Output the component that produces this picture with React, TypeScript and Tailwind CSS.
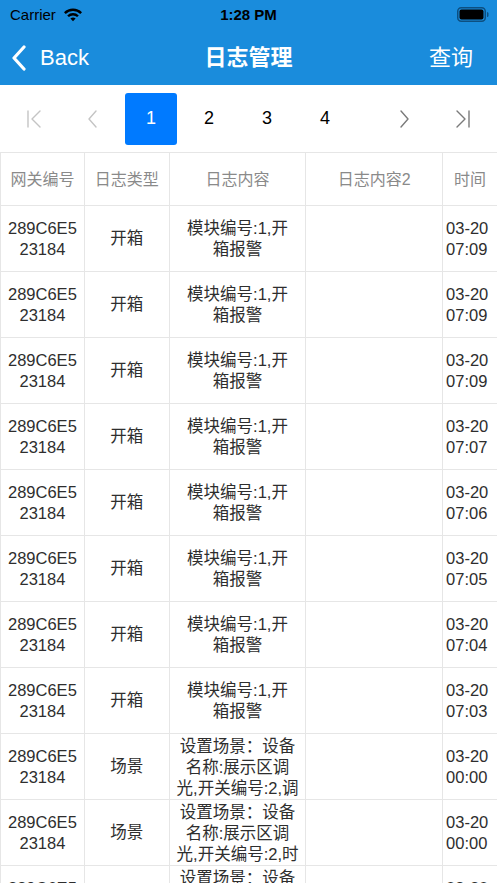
import React from 'react'

const FONT = '"Liberation Sans", "Noto Sans CJK SC", sans-serif'

type Row = { gw: string[]; type: string; content: string[]; time: string[] }

const GW = ['289C6E5', '23184']

const rows: Row[] = [
  { gw: GW, type: '开箱', content: ['模块编号:1,开', '箱报警'], time: ['03-20', '07:09'] },
  { gw: GW, type: '开箱', content: ['模块编号:1,开', '箱报警'], time: ['03-20', '07:09'] },
  { gw: GW, type: '开箱', content: ['模块编号:1,开', '箱报警'], time: ['03-20', '07:09'] },
  { gw: GW, type: '开箱', content: ['模块编号:1,开', '箱报警'], time: ['03-20', '07:07'] },
  { gw: GW, type: '开箱', content: ['模块编号:1,开', '箱报警'], time: ['03-20', '07:06'] },
  { gw: GW, type: '开箱', content: ['模块编号:1,开', '箱报警'], time: ['03-20', '07:05'] },
  { gw: GW, type: '开箱', content: ['模块编号:1,开', '箱报警'], time: ['03-20', '07:04'] },
  { gw: GW, type: '开箱', content: ['模块编号:1,开', '箱报警'], time: ['03-20', '07:03'] },
  { gw: GW, type: '场景', content: ['设置场景：设备', '名称:展示区调', '光,开关编号:2,调'], time: ['03-20', '00:00'] },
  { gw: GW, type: '场景', content: ['设置场景：设备', '名称:展示区调', '光,开关编号:2,时'], time: ['03-20', '00:00'] },
  { gw: GW, type: '场景', content: ['设置场景：设备', '名称:展示区调', '光,开关编号:2,时'], time: ['03-20', '00:00'] },
]

function Lines({ lines }: { lines: string[] }) {
  return (
    <>
      {lines.map((l, i) => (
        <div key={i} className="whitespace-nowrap">
          {l}
        </div>
      ))}
    </>
  )
}

function Wifi() {
  return (
    <svg width="20" height="15" viewBox="0 0 20 15">
      <path d="M1 5.2 A13 13 0 0 1 19 5.2 L17.3 7 A10.6 10.6 0 0 0 2.7 7 Z" fill="#000" />
      <path d="M4.2 8.4 A8.4 8.4 0 0 1 15.8 8.4 L14.1 10.1 A6 6 0 0 0 5.9 10.1 Z" fill="#000" />
      <path d="M7.4 11.6 A3.8 3.8 0 0 1 12.6 11.6 L10 14.3 Z" fill="#000" />
    </svg>
  )
}

function Battery() {
  return (
    <svg width="32" height="15" viewBox="0 0 32 15">
      <rect x="0.75" y="0.75" width="27.5" height="13.5" rx="3.5" fill="none" stroke="#0d4f80" strokeWidth="1.5" />
      <rect x="2.5" y="2.5" width="24" height="10" rx="2" fill="#000" />
      <path d="M30 5 Q31.5 5 31.5 6.5 L31.5 8.5 Q31.5 10 30 10 Z" fill="#0d4f80" />
    </svg>
  )
}

function PageIcon({ kind, color }: { kind: 'first' | 'prev' | 'next' | 'last'; color: string }) {
  return (
    <svg width="24" height="24" viewBox="0 0 24 24" fill="none" stroke={color} strokeWidth="1.4" strokeLinecap="round" strokeLinejoin="round">
      {kind === 'first' && (
        <>
          <path d="M5 4 V20" />
          <path d="M17 4 L9 12 L17 20" />
        </>
      )}
      {kind === 'prev' && <path d="M15 4 L8 12 L15 20" />}
      {kind === 'next' && <path d="M9 4 L16 12 L9 20" />}
      {kind === 'last' && (
        <>
          <path d="M7 4 L15 12 L7 20" />
          <path d="M19 4 V20" />
        </>
      )}
    </svg>
  )
}

export default function App() {
  const cell = 'border-r border-[#e6e6e6] flex flex-col items-center justify-center text-center overflow-hidden'
  return (
    <div className="w-[497px] h-[883px] overflow-hidden bg-white" style={{ fontFamily: FONT }}>
      {/* status + nav */}
      <div className="bg-[#1a8cdc]">
        <div className="h-[30px] flex items-center px-[10px] relative">
          <span className="text-[15px] text-black">Carrier</span>
          <span className="ml-[7px] mt-[-2px]"><Wifi /></span>
          <span className="absolute left-0 right-0 text-center text-[15px] font-bold text-black">1:28 PM</span>
          <span className="ml-auto mr-[-2px] mt-[-2px]"><Battery /></span>
        </div>
        <div className="h-[55px] flex items-center relative">
          <div className="flex items-center pl-[12px]">
            <svg width="14" height="26" viewBox="0 0 14 26" fill="none" stroke="#fff" strokeWidth="3.2" strokeLinecap="round" strokeLinejoin="round">
              <path d="M12 2 L2 13 L12 24" />
            </svg>
            <span className="ml-[14px] text-[22px] text-white">Back</span>
          </div>
          <span className="absolute left-0 right-0 text-center text-[22px] font-bold text-white pointer-events-none">日志管理</span>
          <span className="ml-auto mr-[24px] text-[22px] text-white">查询</span>
        </div>
      </div>

      {/* pagination */}
      <div className="h-[67px] flex items-center justify-between px-[6px]">
        <div className="flex">
          <div className="w-[58px] h-[52px] flex items-center justify-center"><PageIcon kind="first" color="#c4c4c4" /></div>
          <div className="w-[58px] h-[52px] flex items-center justify-center"><PageIcon kind="prev" color="#c4c4c4" /></div>
          <div className="w-[58px] h-[52px] flex items-center justify-center">
            <div className="w-[52px] h-[52px] rounded-[3px] bg-[#007aff] text-white text-[18px] flex items-center justify-center">1</div>
          </div>
          {['2', '3', '4'].map((n) => (
            <div key={n} className="w-[58px] h-[52px] flex items-center justify-center text-[18px] text-black">{n}</div>
          ))}
        </div>
        <div className="flex">
          <div className="w-[58px] h-[52px] flex items-center justify-center"><PageIcon kind="next" color="#7a7a7a" /></div>
          <div className="w-[58px] h-[52px] flex items-center justify-center"><PageIcon kind="last" color="#7a7a7a" /></div>
        </div>
      </div>

      {/* table */}
      <div className="border-t border-l border-[#e6e6e6] text-[16.5px] leading-[21px] text-[#2e2e2e]">
        <div className="flex h-[53px] border-b border-[#e6e6e6] text-[#8a8a8a] text-[16px]">
          <div className={`${cell} w-[84px]`}>网关编号</div>
          <div className={`${cell} w-[85px]`}>日志类型</div>
          <div className={`${cell} w-[137px]`}>日志内容</div>
          <div className={`${cell} w-[137px]`}>日志内容2</div>
          <div className={`${cell} w-[54px] border-r-0`}>时间</div>
        </div>
        {rows.map((r, i) => (
          <div key={i} className="flex h-[66px] border-b border-[#e6e6e6]">
            <div className={`${cell} w-[84px]`}><Lines lines={r.gw} /></div>
            <div className={`${cell} w-[85px]`}>{r.type}</div>
            <div className={`${cell} w-[137px] justify-start pt-[2px]`}>
              <div className={r.content.length > 2 ? '' : 'mt-[10px]'}><Lines lines={r.content} /></div>
            </div>
            <div className={`${cell} w-[137px]`} />
            <div className={`${cell} w-[54px] border-r-0 items-start pl-[3px]`}><Lines lines={r.time} /></div>
          </div>
        ))}
      </div>
    </div>
  )
}
